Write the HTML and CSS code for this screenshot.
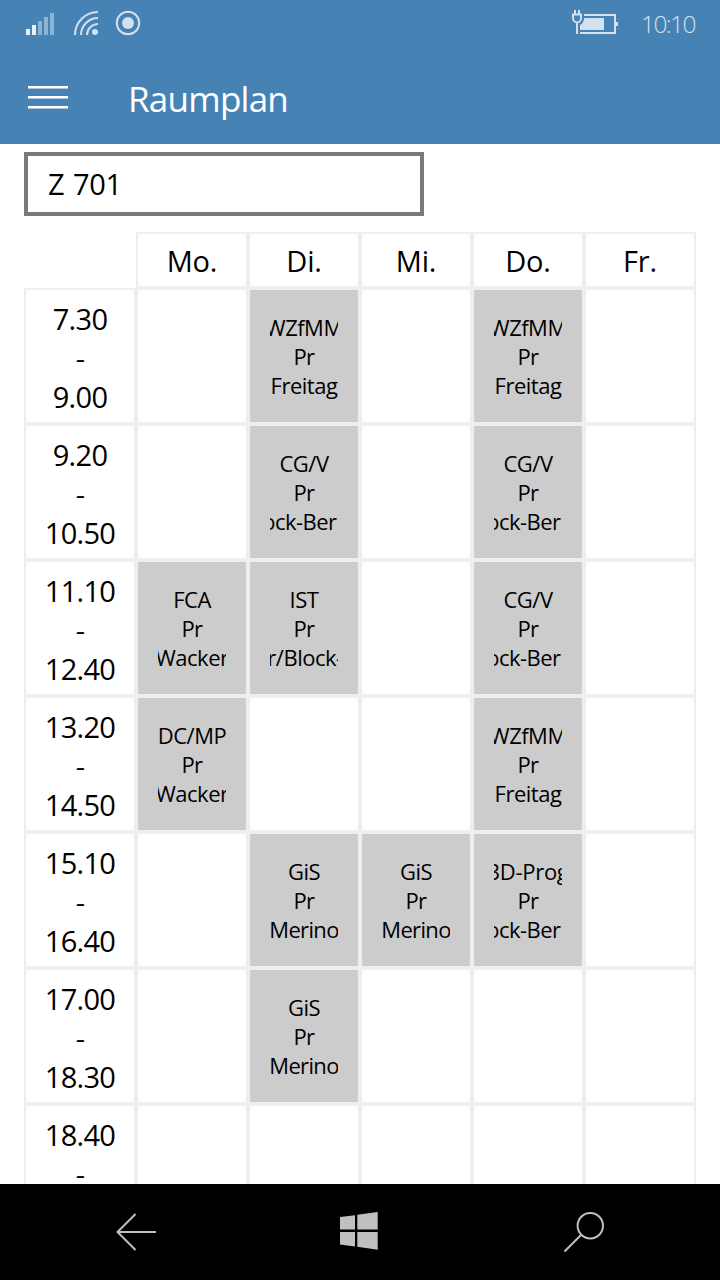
FILE: index.html
```html
<!DOCTYPE html>
<html lang="de">
<head>
<meta charset="utf-8">
<title>Raumplan</title>
<link rel="stylesheet" href="styles.css">
</head>
<body>
<header class="top">
  <div class="status">
    <svg class="status-left" width="160" height="48" viewBox="0 0 160 48">
      <path fill="#eaf0f7" d="M26 29h4v6h-4zM32 25h4v10h-4z"/>
      <path fill="#8fb2d3" d="M38 21h4v14h-4zM44 17h4v18h-4zM50 13h4v22h-4z"/>
      <g fill="none" stroke="#d3e0ed" stroke-width="2"><path d="M75 35A23 23 0 0 1 98 12M81 35A17 17 0 0 1 98 18M87 35A11 11 0 0 1 98 24"/><circle cx="128" cy="23" r="11.2"/></g>
      <circle cx="95" cy="32" r="3" fill="#d3e0ed"/><circle cx="128" cy="23" r="6" fill="#d3e0ed"/>
    </svg>
    <svg class="battery" width="48" height="48" viewBox="570 0 48 48">
      <path fill="none" stroke="#d3e0ed" stroke-width="2" d="M584 15H615V33H580M573 14.500V18a4 4.500 0 0 0 8 0V14.500zM577 22V34M575 10V14M579 10V14"/>
      <path fill="#d3e0ed" d="M584 18H604V30H580V25Q584 23 584 18zM616 22h2v4h-2z"/>
    </svg>
    <span class="clock">10:10</span>
  </div>
  <div class="bar">
    <svg width="40" height="24" viewBox="0 0 40 24"><path fill="#fff" d="M0 0h40v2H0zM0 10h40v2H0zM0 20h40v2H0z"/><path fill="#a9c5de" d="M0 2h40v1H0zM0 12h40v1H0zM0 22h40v1H0z"/></svg>
    <h1 class="title">Raumplan</h1>
  </div>
</header>
<main class="content">
  <div class="room"><span>Z 701</span></div>
  <div class="plan">
    <div></div><div class="cell day">Mo.</div><div class="cell day">Di.</div><div class="cell day">Mi.</div><div class="cell day">Do.</div><div class="cell day">Fr.</div>

    <div class="cell time"><span>7.30</span><span class="dash">-</span><span>9.00</span></div>
    <div class="cell"></div>
    <div class="cell busy"><p><span>WZfMM</span></p><p><span>Pr</span></p><p><span>Freitag</span></p></div>
    <div class="cell"></div>
    <div class="cell busy"><p><span>WZfMM</span></p><p><span>Pr</span></p><p><span>Freitag</span></p></div>
    <div class="cell"></div>

    <div class="cell time"><span>9.20</span><span class="dash">-</span><span>10.50</span></div>
    <div class="cell"></div>
    <div class="cell busy"><p><span>CG/V</span></p><p><span>Pr</span></p><p><span class="block">Block-Ber</span></p></div>
    <div class="cell"></div>
    <div class="cell busy"><p><span>CG/V</span></p><p><span>Pr</span></p><p><span class="block">Block-Ber</span></p></div>
    <div class="cell"></div>

    <div class="cell time"><span>11.10</span><span class="dash">-</span><span>12.40</span></div>
    <div class="cell busy"><p><span>FCA</span></p><p><span>Pr</span></p><p><span>Wacker</span></p></div>
    <div class="cell busy"><p><span>IST</span></p><p><span>Pr</span></p><p><span class="pair">r/Block-Ber</span></p></div>
    <div class="cell"></div>
    <div class="cell busy"><p><span>CG/V</span></p><p><span>Pr</span></p><p><span class="block">Block-Ber</span></p></div>
    <div class="cell"></div>

    <div class="cell time"><span>13.20</span><span class="dash">-</span><span>14.50</span></div>
    <div class="cell busy"><p><span>DC/MP</span></p><p><span>Pr</span></p><p><span>Wacker</span></p></div>
    <div class="cell"></div>
    <div class="cell"></div>
    <div class="cell busy"><p><span>WZfMM</span></p><p><span>Pr</span></p><p><span>Freitag</span></p></div>
    <div class="cell"></div>

    <div class="cell time"><span>15.10</span><span class="dash">-</span><span>16.40</span></div>
    <div class="cell"></div>
    <div class="cell busy"><p><span>GiS</span></p><p><span>Pr</span></p><p><span class="name">Merino</span></p></div>
    <div class="cell busy"><p><span>GiS</span></p><p><span>Pr</span></p><p><span class="name">Merino</span></p></div>
    <div class="cell busy"><p><span class="prog">3D-Prog</span></p><p><span>Pr</span></p><p><span class="block">Block-Ber</span></p></div>
    <div class="cell"></div>

    <div class="cell time"><span>17.00</span><span class="dash">-</span><span>18.30</span></div>
    <div class="cell"></div>
    <div class="cell busy"><p><span>GiS</span></p><p><span>Pr</span></p><p><span class="name">Merino</span></p></div>
    <div class="cell"></div><div class="cell"></div><div class="cell"></div>

    <div class="cell time"><span>18.40</span><span class="dash">-</span></div>
    <div class="cell"></div><div class="cell"></div><div class="cell"></div><div class="cell"></div><div class="cell"></div>
  </div>
</main>
<nav class="nav">
  <svg width="720" height="96" viewBox="0 1184 720 96">
    <g fill="none" stroke="#c0c0c0" stroke-width="2"><path d="M156 1232H118M135.500 1214L117.500 1232L135.500 1250"/><circle cx="590.300" cy="1225.700" r="12.700"/><path d="M581.500 1234.500L564.500 1251.500"/></g>
    <path fill="#c0c0c0" d="M340 1217L355 1215.200V1229.500H340zM357.300 1214.800L377.700 1212V1229.500H357.300zM340 1232H355V1246.500L340 1244.500zM357.300 1232H377.700V1249.700L357.300 1246.800z"/>
  </svg>
</nav>
</body>
</html>
```
FILE: styles.css
```css
* { box-sizing: border-box; }
body {
  margin: 0;
  width: 720px;
  height: 1280px;
  display: flex;
  flex-direction: column;
  overflow: hidden;
  background: #fff;
  color: #000;
  font-family: "Open Sans", "Noto Sans", sans-serif;
}
svg { display: block; flex: none; }
.top { height: 144px; flex: none; background: #4682b4; color: #fff; }
.status { height: 48px; display: flex; }
.battery { margin-left: 410px; }
.clock {
  margin-left: 23px;
  line-height: 48px;
  font-size: 24.5px;
  font-weight: 350;
  letter-spacing: -1.6px;
  color: #d3e0ed;
}
.bar { height: 96px; display: flex; align-items: center; padding: 3px 0 0 28px; }
.title {
  margin: 3px 0 0 60px;
  font-size: 35px;
  font-weight: 400;
  letter-spacing: -0.75px;
  line-height: 48px;
}
.content { height: 1040px; flex: none; overflow: hidden; padding: 8px 24px 0; }
.room {
  width: 400px;
  height: 64px;
  border: 4px solid #7a7a7a;
  padding-left: 20px;
  font-size: 29px;
  letter-spacing: -0.3px;
  word-spacing: 1.5px;
  line-height: 55px;
}
.plan {
  margin-top: 16px;
  display: grid;
  grid-template-columns: repeat(6, 112px);
  grid-template-rows: 56px;
  grid-auto-rows: 136px;
}
.cell { border: 2px solid #efefef; overflow: hidden; }
.day { font-size: 29px; line-height: 54px; text-align: center; letter-spacing: -0.2px; }
.time {
  display: flex;
  flex-direction: column;
  align-items: center;
  padding-top: 9px;
  font-size: 29px;
  line-height: 39px;
  letter-spacing: -0.7px;
}
.dash { transform: translateY(1px) scaleY(0.85); }
.busy {
  background: #ccc;
  background-clip: padding-box;
  padding: 23px 20px 0;
  font-size: 22px;
  letter-spacing: -0.5px;
  line-height: 29px;
}
.busy p {
  margin: 0;
  display: flex;
  justify-content: center;
  overflow: hidden;
  white-space: nowrap;
}
.busy span { flex: none; }
.busy .name { letter-spacing: -0.65px; }
.busy .prog { letter-spacing: -0.3px; }
.block { margin-left: -28px; }
.pair { margin-right: -36px; }
.nav { height: 96px; flex: none; background: #000; }
```
